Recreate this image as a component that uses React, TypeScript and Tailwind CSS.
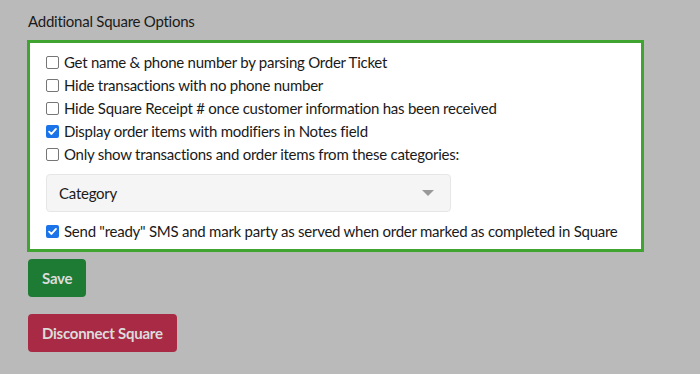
import React from "react";

const Box = ({ checked }: { checked?: boolean }) =>
  checked ? (
    <span className="inline-flex h-[13px] w-[13px] shrink-0 items-center justify-center rounded-[2px] bg-[#1a73e8]">
      <svg width="11" height="11" viewBox="0 0 12 12">
        <path d="M2.3 6.2 L4.9 8.7 L9.8 3.2" fill="none" stroke="#fff" strokeWidth="2" strokeLinecap="round" strokeLinejoin="round" />
      </svg>
    </span>
  ) : (
    <span className="inline-block h-[13px] w-[13px] shrink-0 rounded-[2px] border border-[#767676] bg-white" />
  );

const Row = ({ checked, children }: { checked?: boolean; children: React.ReactNode }) => (
  <label className="flex h-[23px] items-center gap-[5px] whitespace-nowrap">
    <Box checked={checked} />
    <span>{children}</span>
  </label>
);

export default function App() {
  return (
    <div
      className="h-[374px] w-[700px] bg-[#bababa] pl-[27px] pt-[9px] text-[15px] tracking-[-0.25px] text-[#1a1a1a]"
      style={{ fontFamily: "Lato, 'Noto Sans', sans-serif" }}
    >
      <div className="h-[24px] pl-[1px] leading-[24px]">Additional Square Options</div>
      <div className="mt-[7px] w-[617px] border-[3px] border-[#3fa530] bg-white pb-[6px] pl-[16px] pr-[16px] pt-[8px]">
        <Row>Get name &amp; phone number by parsing Order Ticket</Row>
        <Row>Hide transactions with no phone number</Row>
        <Row>Hide Square Receipt # once customer information has been received</Row>
        <Row checked>Display order items with modifiers in Notes field</Row>
        <Row>Only show transactions and order items from these categories:</Row>
        <div className="mb-[8px] mt-[8px] flex h-[38px] w-[405px] items-center justify-between rounded-[4px] border border-[#e6e6e6] bg-[#f5f5f5] pl-[12px] pr-[16px]">
          <span>Category</span>
          <svg width="12" height="7" viewBox="0 0 12 7">
            <path d="M0 0 L12 0 L6 6 Z" fill="#999" />
          </svg>
        </div>
        <Row checked>Send "ready" SMS and mark party as served when order marked as completed in Square</Row>
      </div>
      <div className="mt-[7px] flex flex-col items-start gap-[17px] pl-[1px]">
        <button className="h-[38px] rounded-[4px] bg-[#1e7b34] px-[14px] font-bold text-[#dcdcdc]">Save</button>
        <button className="h-[38px] rounded-[4px] bg-[#a82a45] px-[14px] font-bold text-[#dcdcdc]">Disconnect Square</button>
      </div>
    </div>
  );
}
